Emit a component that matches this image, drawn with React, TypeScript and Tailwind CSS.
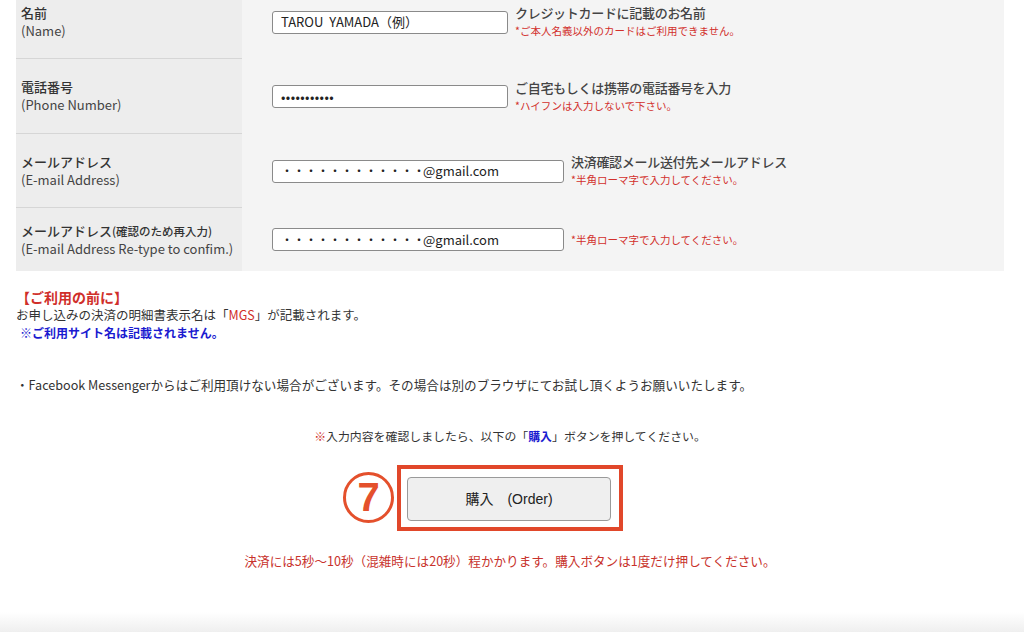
import React from "react";

type RowProps = {
  label: React.ReactNode;
  sub: string;
  value: React.ReactNode;
  inputW: string;
  note?: string;
  warn: string;
  h: string;
  last?: boolean;
};

const FormRow = ({ label, sub, value, inputW, note, warn, h, last }: RowProps) => (
  <div className={`flex ${h}`}>
    <div
      className={`w-[226px] shrink-0 bg-[#ededed] flex flex-col justify-center pl-[5px] text-[13px] leading-[18px] text-[#333] ${
        last ? "" : "border-b border-[#d6d6d6]"
      }`}
    >
      <span className="font-medium">{label}</span>
      <span className="text-[#444]">{sub}</span>
    </div>
    <div className="flex items-center pl-[30px]">
      <div
        className={`${inputW} h-[23px] shrink-0 bg-white border border-[#8a8a8a] rounded-[3px] flex items-center pl-[8px] text-[13px] text-[#222]`}
      >
        {value}
      </div>
      <div className="ml-[7px] flex flex-col">
        {note && <span className="text-[13px] leading-[18px] font-medium text-[#444] tracking-[-0.3px]">{note}</span>}
        <span className="text-[10.5px] leading-[18px] text-[#d2302c]">{warn}</span>
      </div>
    </div>
  </div>
);

const emailMask = (
  <span className="flex items-center">
    <span className="text-[12px]">・・・・・・・・・・・・</span>
    <span className="-ml-[2px]">@gmail.com</span>
  </span>
);

export default function App() {
  return (
    <div className="min-h-[632px] bg-white overflow-hidden font-['Noto_Sans_CJK_JP',sans-serif]">
      <div className="ml-4 w-[988px] -mt-[15px] bg-[#f4f4f4]">
        <FormRow
          h="h-[74px]"
          label="名前"
          sub="(Name)"
          inputW="w-[236px]"
          value={<span>TAROU&nbsp;&nbsp;YAMADA（例）</span>}
          note="クレジットカードに記載のお名前"
          warn="*ご本人名義以外のカードはご利用できません。"
        />
        <FormRow
          h="h-[75px]"
          label="電話番号"
          sub="(Phone Number)"
          inputW="w-[236px]"
          value={<span className="text-[13px] tracking-[0.4px]">•••••••••••</span>}
          note="ご自宅もしくは携帯の電話番号を入力"
          warn="*ハイフンは入力しないで下さい。"
        />
        <FormRow
          h="h-[74px]"
          label="メールアドレス"
          sub="(E-mail Address)"
          inputW="w-[292px]"
          value={emailMask}
          note="決済確認メール送付先メールアドレス"
          warn="*半角ローマ字で入力してください。"
        />
        <FormRow
          h="h-[63px]"
          label={
            <>
              メールアドレス<span className="text-[11.5px]">(確認のため再入力)</span>
            </>
          }
          sub="(E-mail Address Re-type to confim.)"
          inputW="w-[292px]"
          value={emailMask}
          warn="*半角ローマ字で入力してください。"
          last
        />
      </div>

      <div className="ml-4 mt-[17px]">
        <p className="text-[14px] leading-[18px] font-bold text-[#d02f2a]">【ご利用の前に】</p>
        <p className="text-[12.5px] leading-[18px] text-[#333]">
          お申し込みの決済の明細書表示名は「<span className="text-[#d02f2a]">MGS</span>」が記載されます。
        </p>
        <p className="pl-[4px] text-[12px] leading-[18px] font-bold text-[#1a1ad0]">※ご利用サイト名は記載されません。</p>
        <p className="mt-[34px] text-[12.6px] leading-[18px] text-[#333]">
          ・Facebook Messengerからはご利用頂けない場合がございます。その場合は別のブラウザにてお試し頂くようお願いいたします。
        </p>
      </div>

      <div className="w-[1020px] flex flex-col items-center">
        <p className="mt-[33px] text-[11.9px] leading-[18px] text-[#333]">
          <span className="text-[#d02f2a]">※</span>入力内容を確認しましたら、以下の「
          <span className="font-bold text-[#1a1ad0]">購入</span>」ボタンを押してください。
        </p>

        <div className="relative mt-[20px] border-4 border-[#e1472a] pl-[6px] pr-[8px] pt-[8px] pb-[6px]">
          <div className="absolute right-full mr-[7px] top-[3px] w-[51px] h-[51px] rounded-full border-[3.5px] border-[#e4502c] flex items-center justify-center">
            <span className="text-[40px] leading-none font-bold text-[#e4502c] font-['Liberation_Sans',sans-serif] -mt-[1px]">7</span>
          </div>
          <button className="w-[204px] h-[44px] bg-[#efefef] border border-[#9a9a9a] rounded-[4px] text-[14px] text-[#222] font-['Liberation_Sans','Noto_Sans_CJK_JP',sans-serif]">
            購入　(Order)
          </button>
        </div>

        <p className="mt-[21px] text-[12.6px] leading-[18px] text-[#c8322b]">
          決済には5秒～10秒（混雑時には20秒）程かかります。購入ボタンは1度だけ押してください。
        </p>
      </div>

      <div className="mt-[42px] h-[20px] bg-gradient-to-b from-white to-[#efefef]" />
    </div>
  );
}
